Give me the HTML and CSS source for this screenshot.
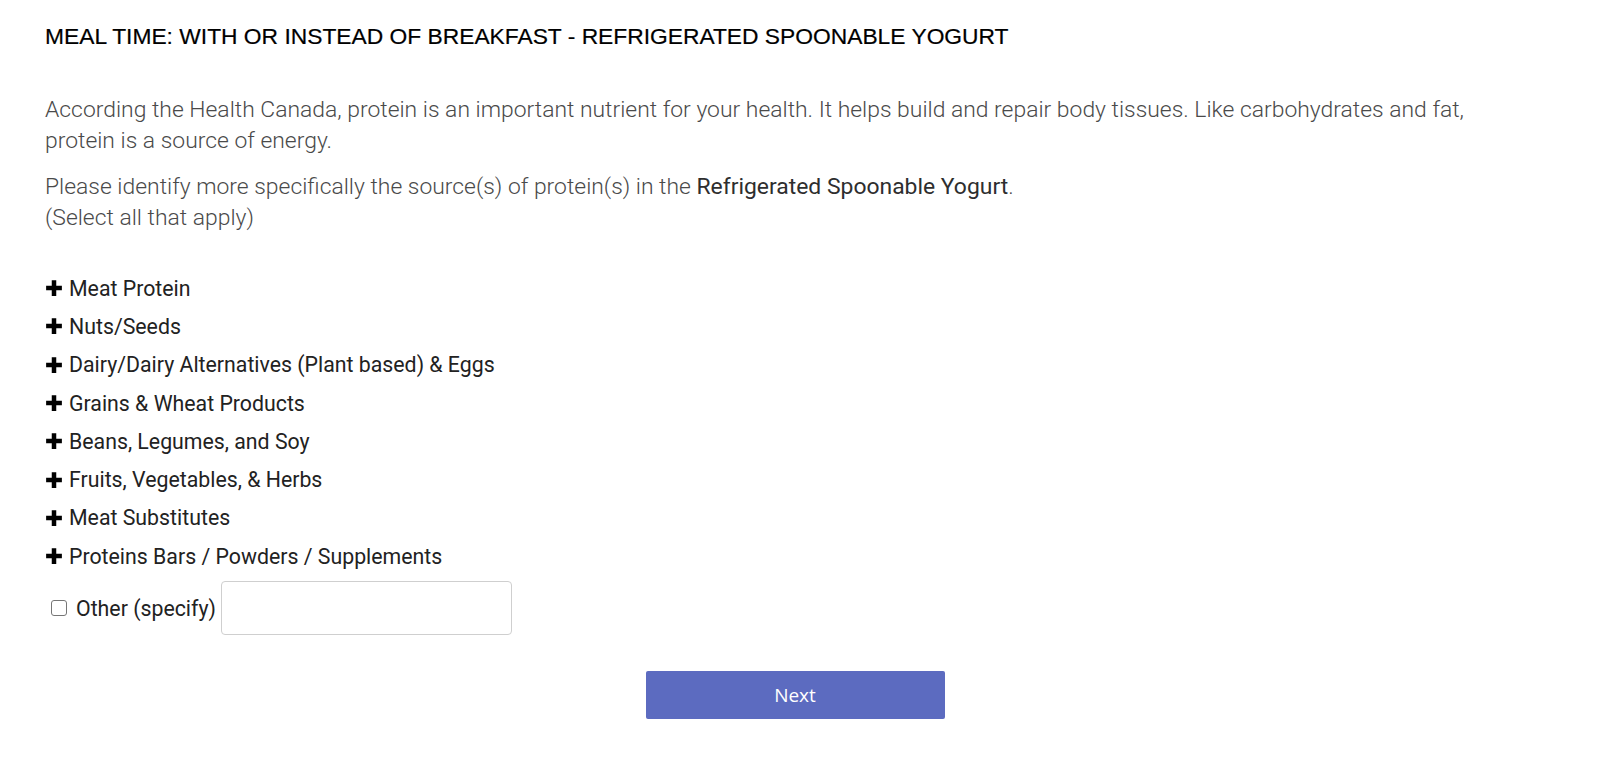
FILE: index.html
```html
<!DOCTYPE html>
<html>
<head>
<meta charset="utf-8">
<link rel="stylesheet" href="styles.css">
</head>
<body>
<div class="page">
  <h1 class="title">MEAL TIME: WITH OR INSTEAD OF BREAKFAST - REFRIGERATED SPOONABLE YOGURT</h1>
  <p class="intro">According the Health Canada, protein is an important nutrient for your health. It helps build and repair body tissues. Like carbohydrates and fat, protein is a source of energy.</p>
  <p class="intro">Please identify more specifically the source(s) of protein(s) in the <strong>Refrigerated Spoonable Yogurt</strong>.<br>(Select all that apply)</p>
  <ul class="groups">
    <li><svg class="plus" viewBox="0 0 16 16"><path d="M6 1h4v5h5v4h-5v5H6v-5H1V6h5z"/></svg>Meat Protein</li>
    <li><svg class="plus" viewBox="0 0 16 16"><path d="M6 1h4v5h5v4h-5v5H6v-5H1V6h5z"/></svg>Nuts/Seeds</li>
    <li><svg class="plus" viewBox="0 0 16 16"><path d="M6 1h4v5h5v4h-5v5H6v-5H1V6h5z"/></svg>Dairy/Dairy Alternatives (Plant based) &amp; Eggs</li>
    <li><svg class="plus" viewBox="0 0 16 16"><path d="M6 1h4v5h5v4h-5v5H6v-5H1V6h5z"/></svg>Grains &amp; Wheat Products</li>
    <li><svg class="plus" viewBox="0 0 16 16"><path d="M6 1h4v5h5v4h-5v5H6v-5H1V6h5z"/></svg>Beans, Legumes, and Soy</li>
    <li><svg class="plus" viewBox="0 0 16 16"><path d="M6 1h4v5h5v4h-5v5H6v-5H1V6h5z"/></svg>Fruits, Vegetables, &amp; Herbs</li>
    <li><svg class="plus" viewBox="0 0 16 16"><path d="M6 1h4v5h5v4h-5v5H6v-5H1V6h5z"/></svg>Meat Substitutes</li>
    <li><svg class="plus" viewBox="0 0 16 16"><path d="M6 1h4v5h5v4h-5v5H6v-5H1V6h5z"/></svg>Proteins Bars / Powders / Supplements</li>
  </ul>
  <div class="other">
    <label class="other-label"><span class="box"></span>Other (specify)</label>
    <input class="other-input" type="text">
  </div>
  <div class="actions">
    <button class="next">Next</button>
  </div>
</div>
</body>
</html>
```
FILE: styles.css
```css
html, body { margin: 0; padding: 0; background: #fff; }
body { font-family: Roboto, "Noto Sans", sans-serif; }
.page { width: 1500px; padding: 22px 0 0 45px; box-sizing: content-box; }
.title { margin: 0; font-family: "Liberation Sans", Arial, sans-serif; font-size: 22.8px; font-weight: 400; color: #000; line-height: 28px; -webkit-text-stroke: 0.2px #000; }
.intro { margin: 0; font-size: 22.9px; font-weight: 300; color: #4a4a4a; line-height: 31px; max-width: 1440px; }
.title + .intro { margin-top: 44px; }
.intro + .intro { margin-top: 15px; }
.intro strong { font-weight: 400; color: #2e2e2e; }
.groups { list-style: none; margin: 36px 0 0 0; padding: 0; }
.groups li { display: flex; align-items: center; height: 38.3px; font-size: 21.3px; color: #222; font-weight: 400; }
.plus { width: 18px; height: 18px; fill: #000; margin-right: 6px; flex: none; }
.other { display: flex; align-items: center; margin-top: 6px; margin-left: 6px; }
.other-label { display: flex; align-items: center; font-size: 21.3px; color: #222; }
.box { width: 16px; height: 16px; border: 1px solid #767676; border-radius: 3px; margin-right: 9px; box-sizing: border-box; }
.other-input { width: 291px; height: 54px; margin-left: 5px; border: 1px solid #cfcfcf; border-radius: 4px; box-sizing: border-box; font-size: 18px; }
.actions { display: flex; justify-content: center; margin-top: 36px; }
.next { width: 299px; height: 48px; background: #5c6bc0; color: #fff; border: none; border-radius: 2px; font-family: "Open Sans", Roboto, sans-serif; font-size: 19px; }
```
